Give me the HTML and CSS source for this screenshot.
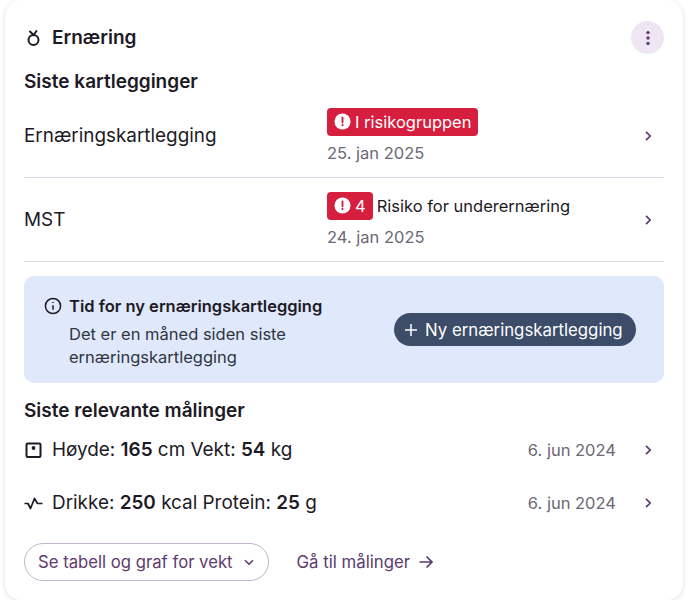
FILE: index.html
```html
<!DOCTYPE html>
<html lang="en">
<head>
    <meta charset="UTF-8">
    <meta name="viewport" content="width=device-width, initial-scale=1.0">
    <title>Ernæring</title>
    <link rel="stylesheet" href="styles.css">
</head>
<body>
    <section class="card">
        <header class="cardHead">
            <span class="cardTitle">
                <svg class="icon" viewBox="0 0 20 20" fill="none" stroke="currentColor" stroke-width="2"><circle cx="9.500" cy="12" r="5"/><path d="M6 3.500 9.500 7l3-4" stroke-linecap="round"/></svg>
                Ernæring
            </span>
            <button class="more">
                <svg viewBox="0 0 20 20" width="20" height="20" fill="currentColor"><circle cx="10" cy="4.600" r="1.700"/><circle cx="10" cy="10" r="1.700"/><circle cx="10" cy="15.400" r="1.700"/></svg>
            </button>
        </header>

        <h2 class="heading">Siste kartlegginger</h2>

        <div class="row row--line">
            <span class="row__name">Ernæringskartlegging</span>
            <div class="row__status">
                <span class="statusLine">
                    <span class="badge">
                        <svg class="badge__icon" viewBox="0 0 18 18"><circle cx="9" cy="9" r="8.500" fill="#fff"/><path d="M9 4.600v5.200M9 12.400v.6" stroke="#d61f3e" stroke-width="2" stroke-linecap="round"/></svg>
                        I risikogruppen
                    </span>
                </span>
                <span class="date">25. jan 2025</span>
            </div>
            <svg class="chevron" viewBox="0 0 12 12" fill="none" stroke="currentColor" stroke-width="1.700"><path d="M4 1.800 8.200 6 4 10.200"/></svg>
        </div>

        <div class="row row--line">
            <span class="row__name">MST</span>
            <div class="row__status">
                <span class="statusLine">
                    <span class="badge">
                        <svg class="badge__icon" viewBox="0 0 18 18"><circle cx="9" cy="9" r="8.500" fill="#fff"/><path d="M9 4.600v5.200M9 12.400v.6" stroke="#d61f3e" stroke-width="2" stroke-linecap="round"/></svg>
                        4
                    </span>
                    Risiko for underernæring
                </span>
                <span class="date">24. jan 2025</span>
            </div>
            <svg class="chevron" viewBox="0 0 12 12" fill="none" stroke="currentColor" stroke-width="1.700"><path d="M4 1.800 8.200 6 4 10.200"/></svg>
        </div>

        <div class="notice">
            <svg class="notice__icon" viewBox="0 0 18 18" fill="none" stroke="currentColor" stroke-width="1.500"><circle cx="9" cy="9" r="7.600"/><path d="M9 8.200v4.600M9 5v.9"/></svg>
            <div class="notice__text">
                <strong>Tid for ny ernæringskartlegging</strong>
                <p>Det er en måned siden siste ernæringskartlegging</p>
            </div>
            <button class="btnNew">
                <svg viewBox="0 0 14 14" width="14" height="14" fill="none" stroke="currentColor" stroke-width="1.500"><path d="M7 1v12M1 7h12"/></svg>
                Ny ernæringskartlegging
            </button>
        </div>

        <h2 class="heading heading--second">Siste relevante målinger</h2>

        <div class="row row--measure">
            <svg class="icon" viewBox="0 0 20 20" fill="none" stroke="currentColor" stroke-width="2"><rect x="2.500" y="3.500" width="14" height="13.500" rx="1.200"/><circle cx="9.500" cy="8" r="1.900" fill="currentColor" stroke="none"/></svg>
            <span class="measure__text">Høyde: <b>165</b> cm Vekt: <b>54</b> kg</span>
            <span class="date">6. jun 2024</span>
            <svg class="chevron" viewBox="0 0 12 12" fill="none" stroke="currentColor" stroke-width="1.700"><path d="M4 1.800 8.200 6 4 10.200"/></svg>
        </div>

        <div class="row row--measure">
            <svg class="icon" viewBox="0 0 20 20" fill="none" stroke="currentColor" stroke-width="1.700"><path d="M0.500 10.500h3.500l2.500 5 4-10 3 5h5" stroke-linejoin="round"/></svg>
            <span class="measure__text">Drikke: <b>250</b> kcal Protein: <b>25</b> g</span>
            <span class="date">6. jun 2024</span>
            <svg class="chevron" viewBox="0 0 12 12" fill="none" stroke="currentColor" stroke-width="1.700"><path d="M4 1.800 8.200 6 4 10.200"/></svg>
        </div>

        <footer class="cardFoot">
            <button class="btnOutline">
                Se tabell og graf for vekt
                <svg viewBox="0 0 12 12" width="12" height="12" fill="none" stroke="currentColor" stroke-width="1.600"><path d="M2 4.200 6 8.200l4-4"/></svg>
            </button>
            <a class="link" href="#">
                Gå til målinger
                <svg viewBox="0 0 16 16" width="16" height="16" fill="none" stroke="currentColor" stroke-width="1.700"><path d="M1.500 8h12.500M8.500 2.500 14 8l-5.500 5.500"/></svg>
            </a>
        </footer>
    </section>
</body>
</html>
```

FILE: styles.css
```css
* {box-sizing: border-box;}
body {margin: 0; background: #fff; font-family: "Inter", "Liberation Sans", sans-serif; color: #1d1a26; font-size: 16.500px;}
button {font-family: inherit; cursor: pointer;}
.icon {width: 20px; height: 20px; flex: none;}

.card {
    width: 678px; height: 600px; margin: 0 5px; padding: 21px 19px 0;
    background: #fff; border-radius: 16px;
    box-shadow: 0 1px 5px rgba(40, 30, 60, .14);
}
.cardHead {display: flex; justify-content: space-between; align-items: center; height: 33px;}
.cardTitle {display: flex; align-items: center; gap: 8px; font-size: 19px; font-weight: 600;}
.more {width: 33px; height: 33px; border: none; border-radius: 50%; background: #efe6f3; color: #5c3a6e; padding: 0; display: flex; align-items: center; justify-content: center;}

.heading {margin: 0; font-size: 19px; line-height: 24px; font-weight: 600;}
.cardHead + .heading {margin-top: 16px;}
.heading--second {margin-top: 16px;}

.row {display: flex; align-items: center;}
.row--line {height: 84px; border-bottom: 1px solid #e2d7e6;}
.row__name {width: 303px; font-size: 18.900px;}
.row__status {flex: 1; display: flex; flex-direction: column; gap: 7px; padding-bottom: 1px;}
.statusLine {display: flex; align-items: center; gap: 4px; height: 28px;}
.badge {display: inline-flex; align-items: center; gap: 4px; height: 28px; padding: 0 7px; background: #d61f3e; color: #fff; border-radius: 4px;}
.badge__icon {width: 17px; height: 17px;}
.date {color: #6d6875; font-size: 16.500px;}
.chevron {width: 12px; height: 12px; color: #5c3a6e; margin: 0 10px 0 0; flex: none;}

.notice {
    display: flex; align-items: center; height: 107px; margin-top: 14px; padding: 0 28px 0 20px;
    background: #e0e9fb; border-radius: 10px;
}
.notice__icon {width: 18px; height: 18px; flex: none; align-self: flex-start; margin-top: 21px;}
.notice__text {width: 325px; margin-left: 7px; padding-top: 4px;}
.notice__text strong {display: block; font-size: 16.500px; font-weight: 600; line-height: 23px;}
.notice__text p {margin: 5px 0 0; line-height: 23px; color: #2f3542;}
.btnNew {display: flex; align-items: center; gap: 7px; height: 33px; padding: 0 13px 0 10px; border: none; border-radius: 17px; background: #3c4c69; color: #fff; font-size: 16.800px; white-space: nowrap;}

.row--measure {height: 53px; gap: 8px; font-size: 18.900px;}
.row--measure b {font-weight: 600;}
.measure__text {flex: 1;}
.row--measure .date {margin-right: 18px;}
.row--measure .chevron {margin-left: 0;}

.cardFoot {display: flex; align-items: center; gap: 28px; margin-top: 14px;}
.btnOutline {display: flex; align-items: center; gap: 10px; height: 38px; padding: 0 13px; border: 1px solid #c3b4cb; border-radius: 19px; background: #fff; color: #5c3a6e; font-size: 16.700px;}
.link {display: flex; align-items: center; gap: 8px; color: #5c3a6e; text-decoration: none; font-size: 16.800px;}
```
